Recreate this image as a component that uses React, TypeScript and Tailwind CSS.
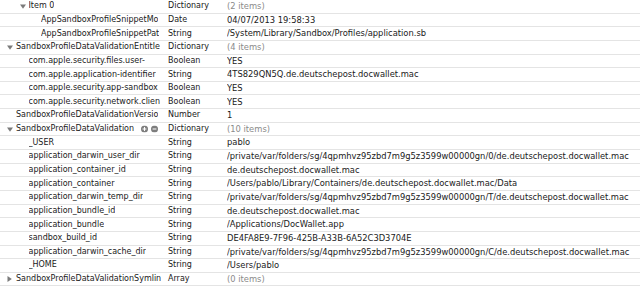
import React from "react";

type Row = {
  key: string;
  level: number;
  toggle?: "open" | "closed";
  type: string;
  value: string;
  muted?: boolean;
  tools?: boolean;
};

const rows: Row[] = [
  { key: "Item 0", level: 1, toggle: "open", type: "Dictionary", value: "(2 items)", muted: true },
  { key: "AppSandboxProfileSnippetMo", level: 2, type: "Date", value: "04/07/2013 19:58:33" },
  { key: "AppSandboxProfileSnippetPat", level: 2, type: "String", value: "/System/Library/Sandbox/Profiles/application.sb" },
  { key: "SandboxProfileDataValidationEntitle", level: 0, toggle: "open", type: "Dictionary", value: "(4 items)", muted: true },
  { key: "com.apple.security.files.user-", level: 1, type: "Boolean", value: "YES" },
  { key: "com.apple.application-identifier", level: 1, type: "String", value: "4TS829QN5Q.de.deutschepost.docwallet.mac" },
  { key: "com.apple.security.app-sandbox", level: 1, type: "Boolean", value: "YES" },
  { key: "com.apple.security.network.clien", level: 1, type: "Boolean", value: "YES" },
  { key: "SandboxProfileDataValidationVersio", level: 0, type: "Number", value: "1" },
  { key: "SandboxProfileDataValidation", level: 0, toggle: "open", type: "Dictionary", value: "(10 items)", muted: true, tools: true },
  { key: "_USER", level: 1, type: "String", value: "pablo" },
  { key: "application_darwin_user_dir", level: 1, type: "String", value: "/private/var/folders/sg/4qpmhvz95zbd7m9g5z3599w00000gn/0/de.deutschepost.docwallet.mac" },
  { key: "application_container_id", level: 1, type: "String", value: "de.deutschepost.docwallet.mac" },
  { key: "application_container", level: 1, type: "String", value: "/Users/pablo/Library/Containers/de.deutschepost.docwallet.mac/Data" },
  { key: "application_darwin_temp_dir", level: 1, type: "String", value: "/private/var/folders/sg/4qpmhvz95zbd7m9g5z3599w00000gn/T/de.deutschepost.docwallet.mac" },
  { key: "application_bundle_id", level: 1, type: "String", value: "de.deutschepost.docwallet.mac" },
  { key: "application_bundle", level: 1, type: "String", value: "/Applications/DocWallet.app" },
  { key: "sandbox_build_id", level: 1, type: "String", value: "DE4FA8E9-7F96-425B-A33B-6A52C3D3704E" },
  { key: "application_darwin_cache_dir", level: 1, type: "String", value: "/private/var/folders/sg/4qpmhvz95zbd7m9g5z3599w00000gn/C/de.deutschepost.docwallet.mac" },
  { key: "_HOME", level: 1, type: "String", value: "/Users/pablo" },
  { key: "SandboxProfileDataValidationSymlin", level: 0, toggle: "closed", type: "Array", value: "(0 items)", muted: true },
];

// left padding of the key cell per nesting level
const indent = ["pl-[7px]", "pl-[19.5px]", "pl-[32px]"];

function Disclosure({ state }: { state?: "open" | "closed" }) {
  return (
    <span className="w-[9px] shrink-0 flex items-center">
      {state === "open" && (
        <svg width="6" height="5" viewBox="0 0 6 5">
          <path d="M0 0.5 L6 0.5 L3 4.8 Z" fill="#7b7b7b" />
        </svg>
      )}
      {state === "closed" && (
        <svg width="5" height="6" viewBox="0 0 5 6">
          <path d="M0.5 0 L4.8 3 L0.5 6 Z" fill="#7b7b7b" />
        </svg>
      )}
    </span>
  );
}

function RowTools() {
  return (
    <span className="absolute left-[141px] top-1/2 -translate-y-1/2 flex gap-[3px]">
      <svg width="7" height="7" viewBox="0 0 7 7">
        <circle cx="3.5" cy="3.5" r="3.5" fill="#7d7d7d" />
        <path d="M3.5 1.6 V5.4 M1.6 3.5 H5.4" stroke="#fff" strokeWidth="1.1" />
      </svg>
      <svg width="7" height="7" viewBox="0 0 7 7">
        <circle cx="3.5" cy="3.5" r="3.5" fill="#7d7d7d" />
        <path d="M1.6 3.5 H5.4" stroke="#fff" strokeWidth="1.1" />
      </svg>
    </span>
  );
}

export default function App() {
  return (
    <div className="w-[640px] h-[291px] bg-white overflow-hidden font-['DejaVu_Sans',sans-serif] text-[8px] text-[#1a1a1a]">
      {rows.map((r, i) => (
        <div key={i} className="h-[13.65px] flex items-center border-b border-[#e4e4e4] whitespace-nowrap">
          <div className={"relative w-[168px] shrink-0 h-full flex items-center overflow-hidden " + indent[r.level]}>
            <Disclosure state={r.toggle} />
            <span className="overflow-hidden">{r.key}</span>
            {r.tools && <RowTools />}
          </div>
          <div className="w-[59px] shrink-0">{r.type}</div>
          <div className={"flex-1 overflow-hidden text-[8.35px] " + (r.muted ? "text-[#8a8a8a]" : "")}>{r.value}</div>
        </div>
      ))}
    </div>
  );
}
